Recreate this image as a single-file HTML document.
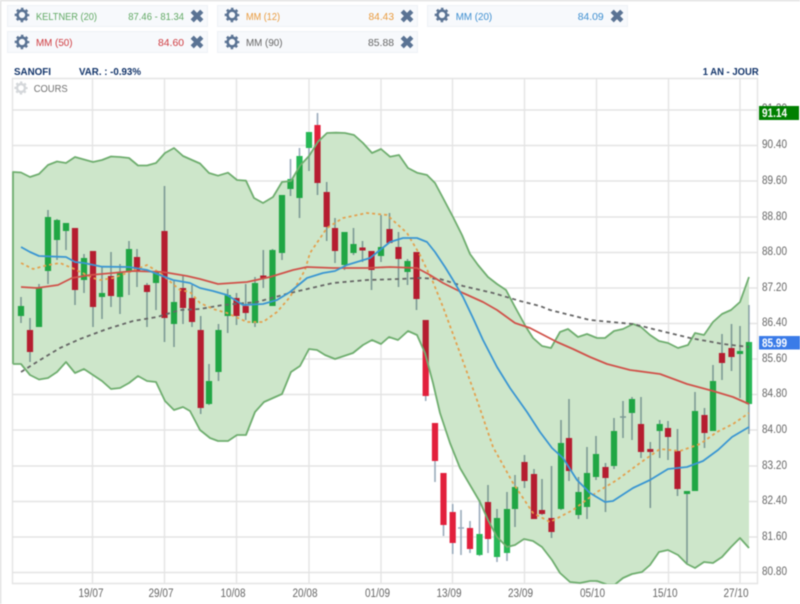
<!DOCTYPE html>
<html lang="fr">
<head>
<meta charset="utf-8">
<title>SANOFI</title>
<style>
html,body{margin:0;padding:0;background:#fff;width:800px;height:604px;overflow:hidden}
svg{display:block;filter:blur(.45px)}
text{font-family:"Liberation Sans",Arial,sans-serif}
.chip{fill:#f7f9fc;stroke:#eef1f6;stroke-width:1}
.ax{font-size:11.5px;fill:#666}
.hd{font-size:10.5px;font-weight:bold;fill:#12346a}
.t{font-size:10.5px}
</style>
</head>
<body>
<svg xmlns="http://www.w3.org/2000/svg" width="800" height="604" viewBox="0 0 800 604">
<defs>
<g id="gear" fill="none">
<circle r="4.4" stroke-width="2.6"/>
<circle r="6.3" stroke-width="2" stroke-dasharray="2.5 2.448" stroke-dashoffset="1.25"/>
</g>
<g id="x" stroke="#5a7394" stroke-width="4.4">
<path d="M-4.8 -4.8L4.8 4.8M-4.8 4.8L4.8 -4.8"/>
</g>
<clipPath id="plot"><rect x="12" y="78" width="746" height="506"/></clipPath>
</defs>
<rect width="800" height="604" fill="#fff"/>
<path d="M0 .5H800M.5 0V604" stroke="#dedede" stroke-width="1.5" fill="none"/>

<!-- chips -->
<rect class="chip" x="7.5" y="5.5" width="200" height="21"/>
<rect class="chip" x="217.5" y="5.5" width="200" height="21"/>
<rect class="chip" x="427.5" y="5.5" width="200" height="21"/>
<rect class="chip" x="7.5" y="31.5" width="200" height="21"/>
<rect class="chip" x="217.5" y="31.5" width="200" height="21"/>

<use href="#gear" x="22" y="15" stroke="#5a7394"/>
<use href="#gear" x="232" y="15" stroke="#5a7394"/>
<use href="#gear" x="442" y="15" stroke="#5a7394"/>
<use href="#gear" x="22" y="42" stroke="#5a7394"/>
<use href="#gear" x="232" y="42" stroke="#5a7394"/>
<use href="#x" x="197" y="16"/>
<use href="#x" x="407" y="16"/>
<use href="#x" x="617" y="16"/>
<use href="#x" x="197" y="42"/>
<use href="#x" x="407" y="42"/>

<text class="t" x="36" y="20" fill="#5fa862" textLength="61" lengthAdjust="spacingAndGlyphs">KELTNER (20)</text>
<text class="t" x="128.3" y="20" fill="#5fa862" textLength="55.7" lengthAdjust="spacingAndGlyphs">87.46 - 81.34</text>
<text class="t" x="246" y="20" fill="#e99a3c" textLength="34" lengthAdjust="spacingAndGlyphs">MM (12)</text>
<text class="t" x="368.5" y="20" fill="#e99a3c" textLength="25.5" lengthAdjust="spacingAndGlyphs">84.43</text>
<text class="t" x="455.7" y="20" fill="#3d8ed0" textLength="36.5" lengthAdjust="spacingAndGlyphs">MM (20)</text>
<text class="t" x="577.7" y="20" fill="#3d8ed0" textLength="26" lengthAdjust="spacingAndGlyphs">84.09</text>
<text class="t" x="36" y="46" fill="#cf3a3f" textLength="36.5" lengthAdjust="spacingAndGlyphs">MM (50)</text>
<text class="t" x="158" y="46" fill="#cf3a3f" textLength="26" lengthAdjust="spacingAndGlyphs">84.60</text>
<text class="t" x="246" y="46" fill="#666" textLength="36.5" lengthAdjust="spacingAndGlyphs">MM (90)</text>
<text class="t" x="368" y="46" fill="#666" textLength="26" lengthAdjust="spacingAndGlyphs">85.88</text>

<text class="hd" x="14" y="75" textLength="37" lengthAdjust="spacingAndGlyphs">SANOFI</text>
<text class="hd" x="79" y="75" textLength="62" lengthAdjust="spacingAndGlyphs">VAR. : -0.93%</text>
<text class="hd" x="702.7" y="75" textLength="56" lengthAdjust="spacingAndGlyphs">1 AN - JOUR</text>

<!-- grid -->
<path stroke="#e4e4e4" stroke-width="1.4" fill="none" d="M12.5 78.5H757.5V583.5H12.5ZM92.5 78V584M164.5 78V584M236.5 78V584M309 78V584M381 78V584M452.5 78V584M524.5 78V584M596.5 78V584M668.5 78V584M740 78V584M12 110H758M12 145.5H758M12 181H758M12 217H758M12 252.5H758M12 288H758M12 323.5H758M12 359H758M12 394.5H758M12 430H758M12 466H758M12 501.5H758M12 537H758M12 572.5H758"/>

<use href="#gear" x="21" y="88" stroke="#d4d7da" transform="translate(2.1 8.8) scale(.9)"/>
<text x="33.7" y="92" font-size="10.5" fill="#707070" textLength="34" lengthAdjust="spacingAndGlyphs">COURS</text>

<g clip-path="url(#plot)">
<!-- wicks -->
<path fill="none" stroke="#9aabbc" stroke-width="1.6" d="M21 297V323M30 318V362M39 284V327M48 210V284M57 219V260M66 223V250M75 228V305M84 254V293M93 251V327M102 267V319M111 252V307M120 264V314M129 241V295M137 249V287M147 283V327M156 270V310M164.5 186V342M174 280V347M183 275V324M192 285V327M200.7 316V414M209 364V405M218.5 324V381M227.7 289V333M236.5 293V325M245.7 284V320M255 277V327M263.3 250V288M272.5 249V306M282 195V260M290.5 159V196M299.5 148V218M309 132V171M317.5 113V195M326.7 182V241M335 218V263M344.5 232V270M353.5 228V255M362.5 241V262M371.5 251V290M381 215V262M389.5 213V243M398.5 232V287M407.5 259V285M416.5 252V310M425.7 320V401M435 423V482M443.5 473V536M452.7 504V554M461 510V555M458 528H464M470 521V553M479.5 500V556M488 485V553M497 509V562M507 492V561M515 475V527M524.5 455V488M534 469V519M542 479V515M551.5 466V538M561 420V510M569 399V481M578.5 477V519M587 447V519M596 436V480M605.5 463V512M614 418V469M623 401V438M620 417H626M632 397V440M641 397V458M650.3 442V508M659.7 420V458M668 421V460M677.5 429V496M687 492V563M695 392V491M704.5 408V448M713 365V431M722 334V380M731.5 324V371M740 326V398M749 305V434"/>
<!-- green bodies -->
<path fill="none" stroke="#27b856" stroke-width="6.2" d="M21 306V316M39 287V327M48 217V271M57 220V240M66 223V231M84 258V280M102 293V297M120 273V297M129 249V272M156 271V283M174 302V324M209 381V404M218.5 330V372M227.7 295V316M255 283V323M272.5 250V306M282 195V253M290.5 179V189M299.5 156V198M309 132V148M344.5 232V265M353.5 244V253M381 247V256M407.5 261V272M479.5 534V555M497 518V557M507 509V553M515 487V509M561 443V509M578.5 492V515M587 473V507M596 454V477M614 431V466M632 399V413M659.7 424V431M687 491V494M695 411V491M713 381V431M740 351V354M749 342V404"/>
<!-- red bodies -->
<path fill="none" stroke="#e2203c" stroke-width="6.2" d="M30 330V352M75 228V290M93 251V307M111 276V296M137 257V272M147 285V292M164.5 231V318M183 288V308M192 298V322M200.7 330V408M236.5 298V316M245.7 306V313M263.3 275.5V278M317.5 125V183M326.7 192V227M335 228V251M362.5 247.5V250.5M371.5 251V270M389.5 229V243M398.5 247V259M416.5 252V299M425.7 320V396M435 423V461M443.5 473V525M452.7 512V543M470 528V549M488 502V539M524.5 462V481M534 474V519M542 510V514M551.5 518V532M569 438V471M605.5 467V478M641 424V452M650.3 449V452M668 428V437M677.5 451V489M704.5 415V433M722 353V363M731.5 348V357"/>
<!-- band -->
<polygon style="mix-blend-mode:multiply" fill="#cde6ca" points="13,172 21,172.5 30,177 39,174 48,165 57,161.5 66,163 75,157 84,159.5 93,162 102,160 111,156.5 120,157 129,158 138,165.5 147,165.5 156,163 165,153 174,148 183,156 192,160 200,163.5 209,173 218,175.7 228,172.7 237,180 246,180.7 254,198 263,203 273,197 282,182 291,181 300,165.7 309,156 318,141.7 327,133 336,132.7 345,133 354,135 363,143 372,153 381,149 390,156.7 399,155 408,168 417,172.7 427,175 435,183 443,198 453,217 462,235 470,254 478,265 488,277 497,284 506,290 515,307 526,327 533,338 542,346 551,348 560,332 568,329 578,337 587,334 597,338 605,338 614,331 623,329 633,324 641,327 650,335 659,341 668,343 678,348 688,345 695,333 704,335 713,322 722,314 731,310 740,302 749,277 749,548 740,538 731,547 722,557 713,563 704,562 695,568 687,564 678,555 668,550 659,552 650,565 642,572 632,574 623,578 615,584.5 607,584.5 597,581 590,581 580,583 570,582 560,573 552,560 542,547 533,541 524,539 515,545 507,547 497,537 488,520 480,502 470,485 460,468 450,443 440,413 433,383 425,353 417,335 408,331 398,340 389,337 381,344 372,340 363,345 353,353 335,359 325,355 317,350 309,349 300,366 291,372 282,394 264,402 255,412 246,435 237,435 228,441 218,441 210,438 200,430 190,411 183,407 174,410 165,401 156,382 147,381 138,376 129,383 120,388 111,389 102,381 93,375 84,369 75,373 66,362 57,372 48,378 39,379.5 30,375 21,364 13,364"/>
<g fill="none" stroke-linejoin="round" stroke-width="1.8">
<polyline stroke="#6fae6f" points="13,364 13,172 21,172.5 30,177 39,174 48,165 57,161.5 66,163 75,157 84,159.5 93,162 102,160 111,156.5 120,157 129,158 138,165.5 147,165.5 156,163 165,153 174,148 183,156 192,160 200,163.5 209,173 218,175.7 228,172.7 237,180 246,180.7 254,198 263,203 273,197 282,182 291,181 300,165.7 309,156 318,141.7 327,133 336,132.7 345,133 354,135 363,143 372,153 381,149 390,156.7 399,155 408,168 417,172.7 427,175 435,183 443,198 453,217 462,235 470,254 478,265 488,277 497,284 506,290 515,307 526,327 533,338 542,346 551,348 560,332 568,329 578,337 587,334 597,338 605,338 614,331 623,329 633,324 641,327 650,335 659,341 668,343 678,348 688,345 695,333 704,335 713,322 722,314 731,310 740,302 749,277"/>
<polyline stroke="#6fae6f" points="13,364 21,364 30,375 39,379.5 48,378 57,372 66,362 75,373 84,369 93,375 102,381 111,389 120,388 129,383 138,376 147,381 156,382 165,401 174,410 183,407 190,411 200,430 210,438 218,441 228,441 237,435 246,435 255,412 264,402 282,394 291,372 300,366 309,349 317,350 325,355 335,359 353,353 363,345 372,340 381,344 389,337 398,340 408,331 417,335 425,353 433,383 440,413 450,443 460,468 470,485 480,502 488,520 497,537 507,547 515,545 524,539 533,541 542,547 552,560 560,573 570,582 580,583 590,581 597,581 607,584.5 615,584.5 623,578 632,574 642,572 650,565 659,552 668,550 678,555 687,564 695,568 704,562 713,563 722,557 731,547 740,538 749,548"/>
<!-- MM 90 -->
<polyline stroke="#666" stroke-dasharray="4 3.5" points="21,372 40,360 60,348 80,339 107,329 133,321 157,317 180,310 200,309 223,305 257,302 290,293 320,286 333,283 367,280 400,279 420,278 440,279 463,286 493,293 520,301 540,306 550,310 590,320 633,324 657,330 690,338 723,344 749,347"/>
<!-- MM 12 -->
<polyline stroke="#e3a14f" stroke-dasharray="3 3" points="21,263 33,269 48,265 60,263 72,268 93,278 100,280 113,278 127,273 147,265 160,273 180,290 190,292 200,303 213,309 227,313 247,322 263,322 277,312 290,297 305,270 310,253 327,228 343,218 367,213 387,215 407,233 420,255 433,282 443,307 460,353 477,400 493,447 513,483 533,513 550,522 573,510 597,492 617,480 640,463 660,449 680,451 700,444 717,432 733,424 749,413"/>
<!-- MM 50 -->
<polyline stroke="#d0524a" points="21,287 37,288 58,285 72,278 90,275 113,273 133,271 163,272 187,276 200,279 218,284 247,282 270,277 293,270 307,267 333,268 367,268 390,267 417,268 430,275 443,283 463,293 483,302 497,310 515,323 530,328 557,342 573,349 590,357 607,364 630,370 660,374 687,384 713,391 733,397 749,404"/>
<!-- MM 20 -->
<polyline stroke="#3a96d2" points="21,247 30,252 39,256 57,256.7 66,257 75,262 84,263 102,266.7 129,267 147,270 165,277 173,280 190,283 200,288 213,291 227,295 243,305 263,304 277,300 290,292 307,278 323,273 335,271 347,265 370,258 380,250 390,242 403,238 417,238 427,242 435,252 445,267 453,280 463,297 473,318 483,340 497,367 510,388 527,412 540,432 552,448 563,458 577,480 590,493 605,502 613,501 633,488 650,480 668,469 687,467 703,461 718,450 732,437 749,427"/>
</g>
</g>

<!-- y axis -->
<text class="ax" x="762" y="112" textLength="25" lengthAdjust="spacingAndGlyphs">91.20</text>
<text class="ax" x="762" y="148" textLength="25" lengthAdjust="spacingAndGlyphs">90.40</text>
<text class="ax" x="762" y="184" textLength="25" lengthAdjust="spacingAndGlyphs">89.60</text>
<text class="ax" x="762" y="220" textLength="25" lengthAdjust="spacingAndGlyphs">88.80</text>
<text class="ax" x="762" y="255" textLength="25" lengthAdjust="spacingAndGlyphs">88.00</text>
<text class="ax" x="762" y="291" textLength="25" lengthAdjust="spacingAndGlyphs">87.20</text>
<text class="ax" x="762" y="326" textLength="25" lengthAdjust="spacingAndGlyphs">86.40</text>
<text class="ax" x="762" y="362" textLength="25" lengthAdjust="spacingAndGlyphs">85.60</text>
<text class="ax" x="762" y="397" textLength="25" lengthAdjust="spacingAndGlyphs">84.80</text>
<text class="ax" x="762" y="433" textLength="25" lengthAdjust="spacingAndGlyphs">84.00</text>
<text class="ax" x="762" y="469" textLength="25" lengthAdjust="spacingAndGlyphs">83.20</text>
<text class="ax" x="762" y="504" textLength="25" lengthAdjust="spacingAndGlyphs">82.40</text>
<text class="ax" x="762" y="540" textLength="25" lengthAdjust="spacingAndGlyphs">81.60</text>
<text class="ax" x="762" y="575" textLength="25" lengthAdjust="spacingAndGlyphs">80.80</text>

<rect x="759" y="106" width="40" height="14" fill="#008000"/>
<text x="762" y="117" font-size="11.5" font-weight="bold" fill="#fff" textLength="25" lengthAdjust="spacingAndGlyphs">91.14</text>
<rect x="759" y="336" width="41" height="13.5" fill="#3a7be8"/>
<text x="762" y="347" font-size="11.5" font-weight="bold" fill="#fff" textLength="25" lengthAdjust="spacingAndGlyphs">85.99</text>

<!-- x axis -->
<text class="ax" x="78.5" y="597" textLength="25" lengthAdjust="spacingAndGlyphs">19/07</text>
<text class="ax" x="148.5" y="597" textLength="25" lengthAdjust="spacingAndGlyphs">29/07</text>
<text class="ax" x="220.5" y="597" textLength="25" lengthAdjust="spacingAndGlyphs">10/08</text>
<text class="ax" x="292.5" y="597" textLength="25" lengthAdjust="spacingAndGlyphs">20/08</text>
<text class="ax" x="365" y="597" textLength="25" lengthAdjust="spacingAndGlyphs">01/09</text>
<text class="ax" x="436.5" y="597" textLength="25" lengthAdjust="spacingAndGlyphs">13/09</text>
<text class="ax" x="508" y="597" textLength="25" lengthAdjust="spacingAndGlyphs">23/09</text>
<text class="ax" x="580" y="597" textLength="25" lengthAdjust="spacingAndGlyphs">05/10</text>
<text class="ax" x="652.5" y="597" textLength="25" lengthAdjust="spacingAndGlyphs">15/10</text>
<text class="ax" x="723.5" y="597" textLength="25" lengthAdjust="spacingAndGlyphs">27/10</text>
</svg>
</body>
</html>
